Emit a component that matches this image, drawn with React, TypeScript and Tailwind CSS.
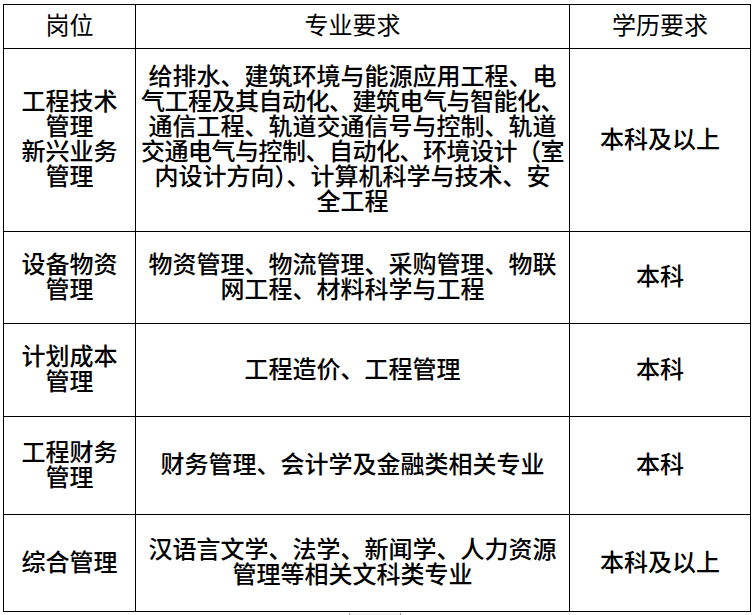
// App.tsx

const font = { fontFamily: '"Noto Sans CJK SC", "Noto Sans", sans-serif' };

interface Row {
  post: string[];
  major: string[];
  tight?: number[];
  degree: string;
  height: string;
}

const rows: Row[] = [
  {
    post: ["工程技术", "管理", "新兴业务", "管理"],
    major: [
      "给排水、建筑环境与能源应用工程、电",
      "气工程及其自动化、建筑电气与智能化、",
      "通信工程、轨道交通信号与控制、轨道",
      "交通电气与控制、自动化、环境设计（室",
      "内设计方向）、计算机科学与技术、安",
      "全工程",
    ],
    tight: [1, 3],
    degree: "本科及以上",
    height: "h-[183px]",
  },
  {
    post: ["设备物资", "管理"],
    major: ["物资管理、物流管理、采购管理、物联", "网工程、材料科学与工程"],
    degree: "本科",
    height: "h-[92px]",
  },
  {
    post: ["计划成本", "管理"],
    major: ["工程造价、工程管理"],
    degree: "本科",
    height: "h-[93px]",
  },
  {
    post: ["工程财务", "管理"],
    major: ["财务管理、会计学及金融类相关专业"],
    degree: "本科",
    height: "h-[98px]",
  },
  {
    post: ["综合管理"],
    major: ["汉语言文学、法学、新闻学、人力资源", "管理等相关文科类专业"],
    degree: "本科及以上",
    height: "h-[97px]",
  },
];

const cell =
  "flex flex-col items-center justify-center border-r border-b border-black pb-[6px] text-center";

const App: React.FC = () => {
  return (
    <div className="w-[754px] h-[615px] bg-white text-black" style={font}>
      <div className="pt-[4px] pl-[3px]">
        {/* Table */}
        <div className="grid w-[748px] grid-cols-[132px_434px_181px] border-l border-t border-black text-[24px] leading-[25px]">
          {/* Header */}
          <div className={`${cell} h-[44px] font-normal`}>岗位</div>
          <div className={`${cell} h-[44px] font-normal`}>专业要求</div>
          <div className={`${cell} h-[44px] font-normal`}>学历要求</div>

          {rows.map((r, i) => (
            <div key={i} className="contents">
              <div className={`${cell} ${r.height} font-medium`}>
                {r.post.map((p, j) => (
                  <span key={j} className="block whitespace-nowrap">
                    {p}
                  </span>
                ))}
              </div>
              <div className={`${cell} ${r.height} font-medium`}>
                {r.major.map((m, j) => (
                  <span
                    key={j}
                    className={`block whitespace-nowrap ${
                      r.tight?.includes(j) ? "tracking-[-0.5px]" : ""
                    }`}
                  >
                    {m}
                  </span>
                ))}
              </div>
              <div className={`${cell} ${r.height} font-medium`}>{r.degree}</div>
            </div>
          ))}
        </div>

        {/* scroll remnant */}
        <div className="ml-[346px] mt-[1px] h-[3px] w-[52px] border-x border-gray-400 bg-gray-100" />
      </div>
    </div>
  );
};

export default App;
